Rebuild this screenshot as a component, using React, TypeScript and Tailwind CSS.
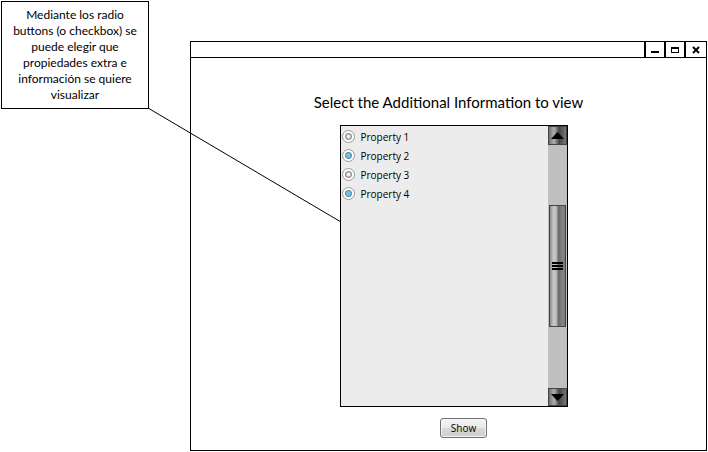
const properties = [
  { id: 1, label: "Property 1", selected: false },
  { id: 2, label: "Property 2", selected: true },
  { id: 3, label: "Property 3", selected: false },
  { id: 4, label: "Property 4", selected: true },
];

function Note() {
  return (
    <aside className="w-[148px] shrink-0 self-start border border-black bg-white px-1 py-[5px] text-center font-['Lato',sans-serif] text-[12px] leading-4">
      Mediante los radio
      <br />
      buttons (o checkbox) se
      <br />
      puede elegir que
      <br />
      propiedades extra e
      <br />
      información se quiere
      <br />
      visualizar
    </aside>
  );
}

function TitleBar() {
  const cell = "flex w-5 items-center justify-center border-l-2 border-black";
  return (
    <header className="flex h-4 justify-end border-b border-black">
      <button type="button" aria-label="Minimize" className={cell}>
        <svg width="10" height="10" shapeRendering="crispEdges">
          <path d="M1 6h8v2H1z" />
        </svg>
      </button>
      <button type="button" aria-label="Maximize" className={cell}>
        <svg width="10" height="10" shapeRendering="crispEdges">
          <path d="M1 2h8v6H1zM2 4v3h6V4z" fillRule="evenodd" />
        </svg>
      </button>
      <button type="button" aria-label="Close" className="flex w-[22px] items-center justify-center border-l-2 border-black">
        <svg width="10" height="10">
          <path d="M2 2l6 6M8 2l-6 6" stroke="black" strokeWidth="2" />
        </svg>
      </button>
    </header>
  );
}

function PropertyOption({ id, label, selected }: { id: number; label: string; selected: boolean }) {
  return (
    <label className="flex h-[19px] items-center gap-[6px]">
      <input
        type="radio"
        name={`property-${id}`}
        defaultChecked={selected}
        className="size-[13px] appearance-none rounded-full border border-[#999999] bg-[radial-gradient(circle,#f4f4f4_0_1.5px,#929292_2.5px_3px,#ffffff_4px)] checked:bg-[radial-gradient(circle,#76bedb_0_2px,#53899f_3px,#ffffff_4px)]"
      />
      {label}
    </label>
  );
}

function Scrollbar() {
  const metal = "shrink-0 border border-[#444444] flex items-center justify-center";
  const endShade = "bg-[linear-gradient(90deg,#707070,#b0b0b0_30%,#444444_60%,#777777)]";
  return (
    <div className="flex w-[19px] flex-col bg-[#c0c0c0]">
      <button type="button" aria-label="Scroll up" className={`${metal} ${endShade} h-[19px]`}>
        <svg width="13" height="7">
          <path d="M6.5 0L13 7H0z" />
        </svg>
      </button>
      <div className="h-[60px]" />
      <button
        type="button"
        aria-label="Scroll position"
        className={`${metal} mx-px h-[122px] bg-[linear-gradient(90deg,#888888,#cccccc_25%,#b2b2b2_45%,#686868_55%,#868686_85%,#777777)]`}
      >
        <svg width="11" height="8" shapeRendering="crispEdges">
          <path d="M0 0h11v2H0zM0 3h11v2H0zM0 6h11v2H0z" />
        </svg>
      </button>
      <div className="flex-1" />
      <button type="button" aria-label="Scroll down" className={`${metal} ${endShade} h-[18px]`}>
        <svg width="13" height="7">
          <path d="M0 0h13L6.5 7z" />
        </svg>
      </button>
    </div>
  );
}

export default function App() {
  return (
    <main className="relative flex bg-white p-px text-black">
      <Note />
      <section className="mt-10 ml-[41px] min-w-0 flex-1 border border-black">
        <TitleBar />
        <div className="flex flex-col items-center pt-[34px] pb-3">
          <h1 className="font-['Lato',sans-serif] text-[15px] leading-5 whitespace-nowrap">
            Select the Additional Information to view
          </h1>
          <div className="pt-[13px] pl-[10px]">
            <div className="flex h-[282px] w-[228px] border border-black bg-[#ececec]">
              <fieldset className="flex-1 px-px pt-px font-['Open_Sans',sans-serif] text-[10px] leading-4">
                {properties.map((property) => (
                  <PropertyOption key={property.id} {...property} />
                ))}
              </fieldset>
              <Scrollbar />
            </div>
          </div>
          <div className="flex pt-[11px] pl-[30px]">
            <button
              type="button"
              className="h-5 w-[47px] rounded-[3px] border border-[#707070] bg-[linear-gradient(#f4f4f4,#e9e9e9_50%,#d8d8d8_52%,#cecece)] font-['Open_Sans',sans-serif] text-[10px] leading-4 shadow-[inset_0_0_0_1px_#f6f6f6]"
            >
              Show
            </button>
          </div>
        </div>
      </section>
      <svg className="pointer-events-none absolute top-0 left-0" width="342" height="224" aria-hidden="true">
        <path d="M148 108L341 222" stroke="black" fill="none" />
      </svg>
    </main>
  );
}
